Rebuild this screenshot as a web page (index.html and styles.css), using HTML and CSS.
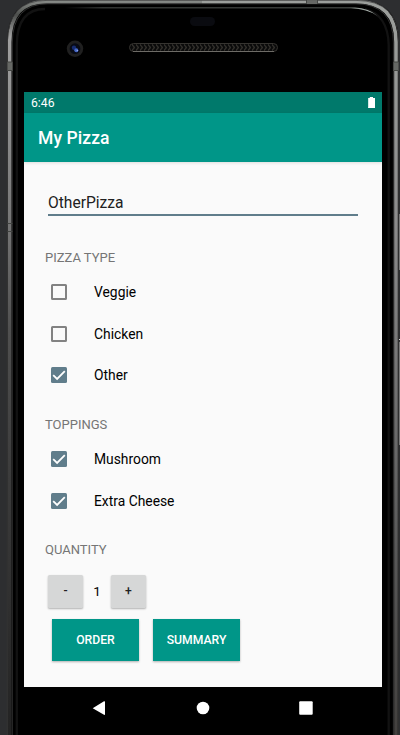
FILE: index.html
```html
<!DOCTYPE html>
<html lang="en">
<head>
<meta charset="utf-8">
<title>My Pizza</title>
<link rel="stylesheet" href="styles.css">
</head>
<body>
<div class="device">
  <svg class="frame" viewBox="0 0 400 735" width="400" height="735" aria-hidden="true">
    <defs>
      <linearGradient id="side" x1="0" y1="0" x2="0" y2="735" gradientUnits="userSpaceOnUse">
        <stop offset="0" stop-color="#8c908c"/><stop offset=".02" stop-color="#4c4e4c"/>
        <stop offset=".05" stop-color="#a0a0a0"/><stop offset=".1" stop-color="#999"/>
        <stop offset=".3" stop-color="#777"/><stop offset=".45" stop-color="#505050"/>
        <stop offset=".65" stop-color="#3c3c3c"/><stop offset="1" stop-color="#232323"/>
      </linearGradient>
      <linearGradient id="rightSide" x1="0" y1="0" x2="0" y2="735" gradientUnits="userSpaceOnUse">
        <stop offset="0" stop-color="#9c9f9c"/><stop offset=".3" stop-color="#8c8c8c"/>
        <stop offset=".5" stop-color="#757575"/><stop offset=".75" stop-color="#585858"/><stop offset="1" stop-color="#42403e"/>
      </linearGradient>
      <linearGradient id="glint" x1="65" y1="0" x2="378" y2="0" gradientUnits="userSpaceOnUse">
        <stop offset="0" stop-color="#000"/><stop offset=".12" stop-color="#626763"/>
        <stop offset=".9" stop-color="#747b76"/><stop offset="1" stop-color="#c0c8c3"/>
      </linearGradient>
      <pattern id="mesh" width="4" height="6" patternUnits="userSpaceOnUse" y="44.5" x="132">
        <path d="M0 0L2.5 3L0 6" fill="none" stroke="#4c4741" stroke-width="1"/>
      </pattern>
    </defs>
    <path d="M7 735V42Q7 0 47 0H356Q399 0 399 42V735Z" fill="#000"/>
    <path d="M9.7 735V42Q9.7 1.7 47 1.7H202" fill="none" stroke="url(#side)" stroke-width="3.6"/>
    <path d="M202 1.7H356Q396 1.7 396 42V735" fill="none" stroke="url(#rightSide)" stroke-width="3.6"/>
    <path d="M7.4 735V42Q7.4 .4 47 .4H356Q398.6 .4 398.6 42V735" fill="none" stroke="#444" stroke-width=".8"/>
    <path d="M12.3 735V43Q12.3 3.8 48 3.8H355Q393.4 3.8 393.4 43V735" fill="none" stroke="#444" stroke-width=".7"/>
    <path d="M16.8 735V45Q17 9 45 9M388.7 735V45Q388 15 365 9" fill="none" stroke="#121212" stroke-width="2.3"/>
    <path d="M65 7.5H355Q369 8 377.5 16Q367 8.7 351 8.3H65Z" fill="url(#glint)"/>
    <path d="M7.5 62H12.5V71H7.5ZM393.5 62H398.5V71H393.5ZM306.5 .5H317.5V4H306.5Z" fill="#666865"/>
    <path d="M7.5 62H12.5M7.5 70.5H12.5M393.5 62H398.5M393.5 70.5H398.5M306.5 0V4M317.5 0V4M7.5 223.5H12.5M7.5 231.5H12.5" stroke="#444643" fill="none"/>
    <path d="M399.5 214V270M399.5 342V445" stroke="#777" fill="none"/>
    <path d="M399.5 339V340" stroke="#ddd" fill="none"/>
    <rect x="190" y="17" width="25" height="9" rx="4.5" fill="#0a0b10"/>
    <circle cx="75" cy="48.7" r="8.2" fill="#202020"/>
    <circle cx="75" cy="48.7" r="5.4" fill="#080b16"/>
    <circle cx="74" cy="47.7" r="2.2" fill="#172c70"/>
    <circle cx="76.3" cy="50.3" r="2" fill="#4668c8"/>
    <circle cx="77.3" cy="50.6" r=".7" fill="#a8b8ef"/>
    <rect x="129.5" y="43.5" width="148" height="8" rx="4" fill="#0b0b0b" stroke="#363430"/>
    <rect x="132" y="44.5" width="143" height="6" fill="url(#mesh)"/>
    <path d="M133 51.5H274" stroke="#6d6b66"/>
  </svg>

  <main class="screen">
    <div class="status">
      <span>6:46</span>
      <svg width="8" height="11" viewBox="0 0 8 11"><path d="M0 1H1.8V0H5V1H7V11H0Z" fill="#fff"/><path d="M0 1V10.5" stroke="#a8d0ca" /></svg>
    </div>
    <header class="appbar">My Pizza</header>
    <div class="content">
      <div class="name-field"><span>OtherPizza</span></div>
      <h2 class="section">PIZZA TYPE</h2>
      <div class="option"><span class="box"></span><span>Veggie</span></div>
      <div class="option"><span class="box"></span><span>Chicken</span></div>
      <div class="option"><span class="box checked"><svg viewBox="0 0 16 16"><path d="M2.2 8.2L6.1 12L13.8 4.2"/></svg></span><span>Other</span></div>
      <h2 class="section">TOPPINGS</h2>
      <div class="option"><span class="box checked"><svg viewBox="0 0 16 16"><path d="M2.2 8.2L6.1 12L13.8 4.2"/></svg></span><span>Mushroom</span></div>
      <div class="option"><span class="box checked"><svg viewBox="0 0 16 16"><path d="M2.2 8.2L6.1 12L13.8 4.2"/></svg></span><span>Extra Cheese</span></div>
      <h2 class="section">QUANTITY</h2>
      <div class="quantity"><button class="step">-</button><span class="count">1</span><button class="step">+</button></div>
      <div class="actions"><button class="action">ORDER</button><button class="action">SUMMARY</button></div>
    </div>
  </main>
  <nav class="navbar">
    <svg width="14" height="16" viewBox="0 0 14 16"><path d="M.7 8.2L12 1.3Q13 .8 13 2V14Q13 15.4 12 14.8Z" fill="#fff"/></svg>
    <svg width="14" height="14" viewBox="0 0 14 14"><circle cx="7" cy="7" r="6.3" fill="#fff"/></svg>
    <svg width="14" height="14" viewBox="0 0 14 14"><rect x=".2" y=".2" width="13.5" height="13.6" rx="1" fill="#fff"/></svg>
  </nav>
</div>
</body>
</html>
```

FILE: styles.css
```css
* { box-sizing: border-box; }
body {
  margin: 0;
  background: #2d2e30;
  font-family: Roboto, "Liberation Sans", sans-serif;
}
.device {
  position: relative;
  width: 400px;
  height: 735px;
  padding: 92px 18px 0 24px;
  overflow: hidden;
}
.frame { position: absolute; inset: 0; }
.screen {
  position: relative;
  height: 595px;
  background: #fafafa;
}
.status {
  height: 21px;
  padding: 0 6px 0 7px;
  display: flex;
  align-items: center;
  justify-content: space-between;
  background: #00796b;
  color: #fff;
  font-size: 12.2px;
}
.appbar {
  height: 49px;
  padding: 1px 14px 0;
  display: flex;
  align-items: center;
  background: #009688;
  color: #fff;
  font-size: 17.5px;
  font-weight: 500;
  letter-spacing: .08px;
  box-shadow: 0 1px 3px rgba(0, 0, 0, .12);
}
.content { padding: 26px 24px 0 21px; }
.name-field {
  height: 28px;
  margin-left: 3px;
  padding-top: 5px;
  border-bottom: 2px solid #607d8b;
  color: #212121;
  font-size: 15.6px;
  line-height: 20px;
}
.section {
  height: 18px;
  margin: 32px 0 5px;
  padding-top: 1px;
  color: #757575;
  font-size: 13px;
  font-weight: 400;
  line-height: 18px;
}
.option {
  height: 41.7px;
  display: flex;
  align-items: center;
  gap: 27px;
  padding-left: 6px;
  color: #000;
  font-size: 13.85px;
}
.option + .section { margin-top: 19px; }
.box {
  width: 16px;
  height: 16px;
  border: 2px solid #828282;
  border-radius: 1.5px;
}
.checked { border: 0; background: #607d8b; }
.checked svg { display: block; }
.checked path { fill: none; stroke: #fff; stroke-width: 1.8; }
button {
  border: 0;
  padding: 0;
  font: 500 12.2px Roboto, "Liberation Sans", sans-serif;
  box-shadow: 0 1px 2px rgba(0, 0, 0, .3);
}
.quantity {
  display: flex;
  align-items: center;
  margin: 16.5px 0 0 3px;
}
.step {
  width: 35px;
  height: 33px;
  border-radius: 1.5px;
  background: #d6d7d7;
  color: #212121;
}
.count { width: 28px; text-align: center; font-size: 13.5px; line-height: 20px; }
.actions { display: flex; gap: 14px; margin: 11px 0 0 7px; }
.action {
  width: 87px;
  height: 42px;
  background: #009688;
  color: #fff;
}
.navbar {
  position: relative;
  height: 48px;
  padding: 0 69px 6px 68px;
  display: flex;
  align-items: center;
  justify-content: space-between;
}
```
